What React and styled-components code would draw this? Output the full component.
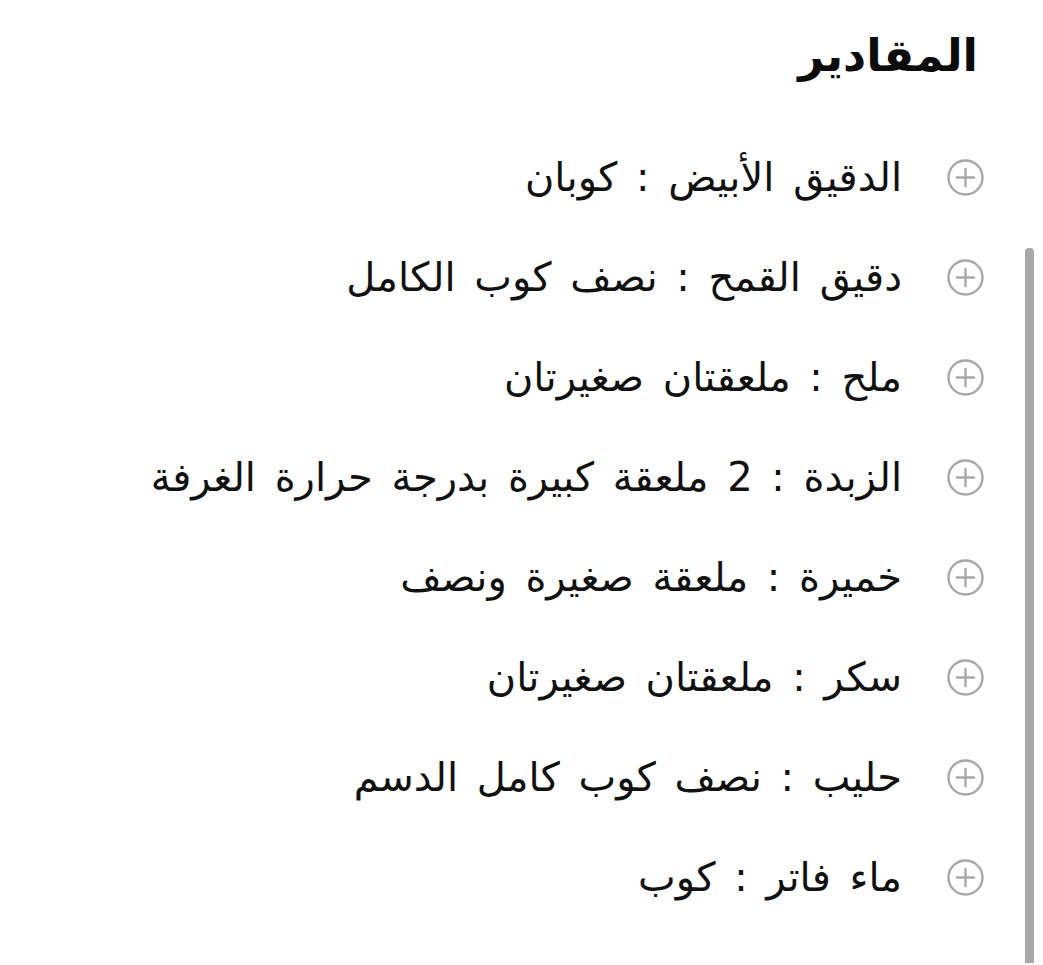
import React from 'react';
import styled, { createGlobalStyle } from 'styled-components';

const GlobalStyle = createGlobalStyle`
  html, body {
    margin: 0;
    padding: 0;
    background: #ffffff;
  }
  body {
    font-family: "DejaVu Sans", "Noto Sans", sans-serif;
    color: #111111;
  }
`;

const Page = styled.div`
  position: relative;
  direction: rtl;
  width: 1043px;
  height: 965px;
  overflow: hidden;
  box-sizing: border-box;
  padding: 26px 59px 0 0;
`;

const Title = styled.h2`
  margin: 0 6px 0 0;
  font-size: 45px;
  font-weight: 700;
  line-height: 60px;
  color: #0c0c0c;
`;

const List = styled.ul`
  list-style: none;
  margin: 41px 0 0 0;
  padding: 0;
  display: flex;
  flex-direction: column;
`;

const Row = styled.li`
  display: flex;
  align-items: center;
  gap: 45px;
  height: 100px;
`;

const Label = styled.span`
  font-size: 40px;
  line-height: 1;
  word-spacing: 6px;
  white-space: nowrap;
  color: #111111;
`;

const Thumb = styled.div`
  position: absolute;
  right: 9px;
  top: 248px;
  bottom: 2px;
  width: 9px;
  border-radius: 4px 4px 0 0;
  background: #a9a9a9;
`;

const PlusIcon = () => (
  <svg width="37" height="37" viewBox="0 0 37 37" fill="none">
    <circle cx="18.5" cy="18.5" r="17" stroke="#a8a8a8" strokeWidth="2.4" />
    <path d="M10 18.5h17M18.5 10v17" stroke="#a8a8a8" strokeWidth="2.4" strokeLinecap="round" />
  </svg>
);

const items = [
  'الدقيق الأبيض : كوبان',
  'دقيق القمح : نصف كوب الكامل',
  'ملح : ملعقتان صغيرتان',
  'الزبدة : 2 ملعقة كبيرة بدرجة حرارة الغرفة',
  'خميرة : ملعقة صغيرة ونصف',
  'سكر : ملعقتان صغيرتان',
  'حليب : نصف كوب كامل الدسم',
  'ماء فاتر : كوب',
];

const App = () => (
  <>
    <GlobalStyle />
    <Page>
      <Title>المقادير</Title>
      <List>
        {items.map(item => (
          <Row key={item}>
            <PlusIcon />
            <Label>{item}</Label>
          </Row>
        ))}
      </List>
      <Thumb />
    </Page>
  </>
);

export default App;
